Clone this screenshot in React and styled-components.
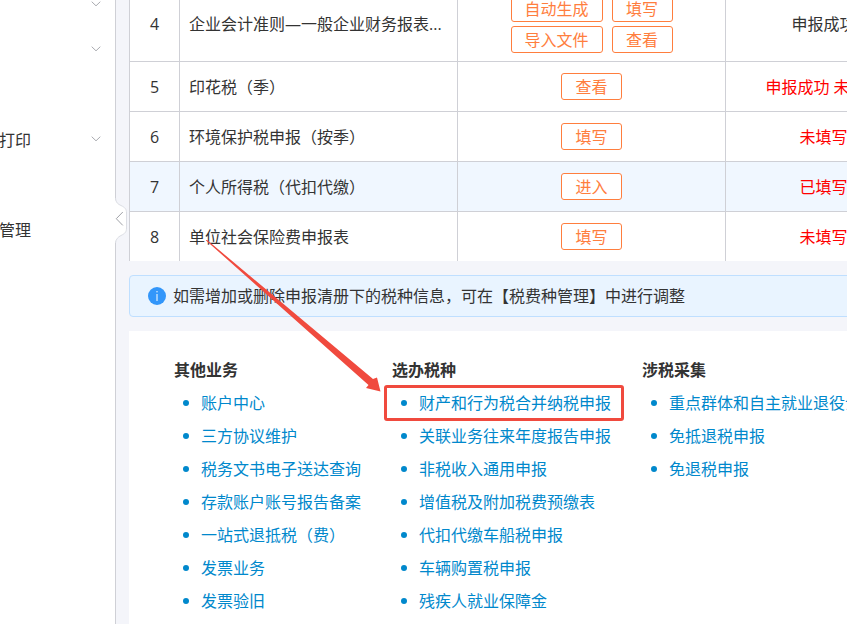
import styled, { createGlobalStyle } from "styled-components";

const menuItems = [
  { id: 1, text: "", arrow: true },
  { id: 2, text: "", arrow: true },
  { id: 3, text: "", arrow: false },
  { id: 4, text: "打印", arrow: true },
  { id: 5, text: "", arrow: false },
  { id: 6, text: "管理", arrow: false },
];

const rows = [
  {
    no: 4,
    name: "企业会计准则—一般企业财务报表...",
    actions: ["自动生成", "填写", "导入文件", "查看"],
    status: "申报成功",
    done: true,
  },
  { no: 5, name: "印花税（季）", actions: ["查看"], status: "申报成功 未缴款" },
  { no: 6, name: "环境保护税申报（按季）", actions: ["填写"], status: "未填写" },
  { no: 7, name: "个人所得税（代扣代缴）", actions: ["进入"], status: "已填写", active: true },
  { no: 8, name: "单位社会保险费申报表", actions: ["填写"], status: "未填写" },
];

const groups = [
  {
    title: "其他业务",
    links: [
      "账户中心",
      "三方协议维护",
      "税务文书电子送达查询",
      "存款账户账号报告备案",
      "一站式退抵税（费）",
      "发票业务",
      "发票验旧",
    ],
  },
  {
    title: "选办税种",
    links: [
      "财产和行为税合并纳税申报",
      "关联业务往来年度报告申报",
      "非税收入通用申报",
      "增值税及附加税费预缴表",
      "代扣代缴车船税申报",
      "车辆购置税申报",
      "残疾人就业保障金",
    ],
    marked: 0,
  },
  {
    title: "涉税采集",
    links: ["重点群体和自主就业退役士兵", "免抵退税申报", "免退税申报"],
  },
];

function Sidebar() {
  return (
    <Side>
      {menuItems.map((item) => (
        <MenuItem key={item.id}>
          <MenuText>{item.text}</MenuText>
          {item.arrow && (
            <svg width="10" height="6" viewBox="0 0 10 6" fill="none" stroke="#a9abb0">
              <path d="M0.7 0.7L5 4.8L9.3 0.7" />
            </svg>
          )}
        </MenuItem>
      ))}
    </Side>
  );
}

function TaxTable() {
  return (
    <Table>
      <colgroup>
        <col width="50" />
        <col width="278" />
        <col width="268" />
        <col />
      </colgroup>
      <tbody>
        {rows.map((row) => (
          <Row key={row.no} $active={row.active}>
            <Cell $center>{row.no}</Cell>
            <Cell>{row.name}</Cell>
            <Cell $center>
              <Actions $grid={row.actions.length > 1}>
                {row.actions.map((action) => (
                  <ActionButton key={action}>{action}</ActionButton>
                ))}
              </Actions>
            </Cell>
            <Cell $center $warn={!row.done}>
              {row.status}
            </Cell>
          </Row>
        ))}
      </tbody>
    </Table>
  );
}

function App() {
  return (
    <>
      <GlobalStyle />
      <Page>
        <Sidebar />
        <Main>
          <Content>
            <TaxTable />
            <Notice>
              <InfoIcon viewBox="0 0 18 18">
                <circle cx="9" cy="9" r="9" fill="#3296fa" />
                <path d="M9 4V5.4M9 7V14" stroke="#fff" strokeWidth="1" />
              </InfoIcon>
              如需增加或删除申报清册下的税种信息，可在【税费种管理】中进行调整
            </Notice>
            <Panel>
              {groups.map((group) => (
                <section key={group.title}>
                  <GroupTitle>{group.title}</GroupTitle>
                  <LinkList>
                    {group.links.map((link, i) => (
                      <LinkItem key={link} $marked={group.marked === i}>
                        <a href="#">{link}</a>
                      </LinkItem>
                    ))}
                  </LinkList>
                </section>
              ))}
            </Panel>
          </Content>
        </Main>
        <CollapseButton aria-label="收起菜单">
          <svg width="13" height="46" viewBox="0 0 13 46" fill="none">
            <path
              d="M0 0C1 5 3 6 6 7.5C10 9.5 11.5 11 11.5 15V30C11.5 34 10 35.5 6 37.5C3 39 1 41 0 45Z"
              fill="#fff"
            />
            <path
              d="M0.5 0C1 5 3 6 6 7.5C10 9.5 11.5 11 11.5 15V30C11.5 34 10 35.5 6 37.5C3 39 1 41 0.5 45"
              stroke="#dcdee4"
            />
            <path d="M7.8 14L1.3 20.7L7.8 27.4" stroke="#a0a2a8" />
          </svg>
        </CollapseButton>
        <Arrow viewBox="0 0 180 156">
          <path
            d="M0.5 -0.5L167 139L171 137.5L174.5 151.5L160 148L162.5 145L0 0.5Z"
            fill="#f04a3e"
          />
        </Arrow>
      </Page>
    </>
  );
}

export default App;

const GlobalStyle = createGlobalStyle`
  *,
  *::before,
  *::after {
    box-sizing: border-box;
  }
  body {
    margin: 0;
    color: #333;
    background-color: #f4f5fa;
    font-family: "Open Sans", "Noto Sans CJK SC", sans-serif;
    font-size: 16px;
    line-height: 24px;
  }
`;

const Page = styled.div`
  position: relative;
  display: flex;
  height: 100vh;
  overflow: hidden;
`;

const Side = styled.nav`
  flex: 0 0 116px;
  margin-top: -19px;
  background-color: #fff;
  border-right: 1px solid #cfd0d6;
`;

const MenuItem = styled.div`
  display: flex;
  align-items: center;
  justify-content: space-between;
  height: 45px;
  padding-right: 14px;
`;

const MenuText = styled.span`
  display: flex;
  justify-content: flex-end;
  width: 31px;
  padding-top: 2px;
  white-space: nowrap;
`;

const Main = styled.main`
  flex: 1;
  min-width: 0;
  padding-left: 13px;
  overflow: hidden;
`;

/* the list keeps its columns readable and is cut off on narrow windows */
const Content = styled.div`
  min-width: 793px;
  margin-top: -12px;
`;

const Table = styled.table`
  width: 100%;
  table-layout: fixed;
  border-spacing: 0;
  background-color: #fff;
  border-left: 1px solid #cfd0d6;
`;

const Row = styled.tr`
  background-color: ${(props) => (props.$active ? "#f0f7ff" : "#fff")};
`;

const Cell = styled.td`
  height: 50px;
  padding: 7px 9px;
  text-align: ${(props) => (props.$center ? "center" : "left")};
  color: ${(props) => (props.$warn ? "#f00" : "#333")};
  white-space: nowrap;
  border-right: 1px solid #cfd0d6;
  border-bottom: 1px solid #cfd0d6;
  tr:first-child & {
    height: 74px;
    padding-bottom: 8px;
  }
  tr:last-child & {
    height: 49px;
    border-bottom: none;
  }
`;

const Actions = styled.div`
  display: grid;
  grid-template-columns: ${(props) => (props.$grid ? "92px 61px" : "61px")};
  justify-content: center;
  gap: 4px 9px;
`;

const ActionButton = styled.button`
  height: 27px;
  padding: 0;
  color: #ff7e3e;
  background-color: #fff;
  border: 1px solid #ff7e3e;
  border-radius: 3px;
  font-family: inherit;
  font-size: 16px;
  line-height: 24px;
  cursor: pointer;
`;

const Notice = styled.div`
  display: flex;
  align-items: center;
  gap: 7px;
  height: 42px;
  margin: 14px 0;
  padding-left: 18px;
  background-color: #e9f4ff;
  border: 1px solid #bfdfff;
  border-radius: 4px;
`;

const InfoIcon = styled.svg`
  width: 18px;
  height: 18px;
`;

const Panel = styled.div`
  display: grid;
  grid-template-columns: 218px 250px 1fr;
  min-height: 320px;
  padding: 23px 0 23px 45px;
  background-color: #fff;
`;

const GroupTitle = styled.h3`
  margin: 0;
  font-size: 16px;
  font-weight: 700;
  line-height: 32px;
`;

const LinkList = styled.ul`
  margin: 0;
  padding: 0;
  list-style: none;
`;

const LinkItem = styled.li`
  position: relative;
  display: flex;
  align-items: center;
  gap: 12px;
  height: 33px;
  padding-left: 9px;
  white-space: nowrap;
  &::before {
    content: "";
    width: 6px;
    height: 6px;
    background-color: #0088cc;
    border-radius: 50%;
  }
  &::after {
    content: "";
    display: ${(props) => (props.$marked ? "block" : "none")};
    position: absolute;
    top: -1px;
    left: -8px;
    width: 240px;
    height: 36px;
    border: 3px solid #f04a3e;
    border-radius: 3px;
    pointer-events: none;
  }
  a {
    color: #0088cc;
    text-decoration: none;
  }
`;

const CollapseButton = styled.button`
  position: absolute;
  top: 198px;
  left: 115px;
  display: flex;
  padding: 0;
  background: none;
  border: none;
  cursor: pointer;
`;

const Arrow = styled.svg`
  position: absolute;
  top: 240px;
  left: 206px;
  width: 180px;
  height: 156px;
  pointer-events: none;
`;
